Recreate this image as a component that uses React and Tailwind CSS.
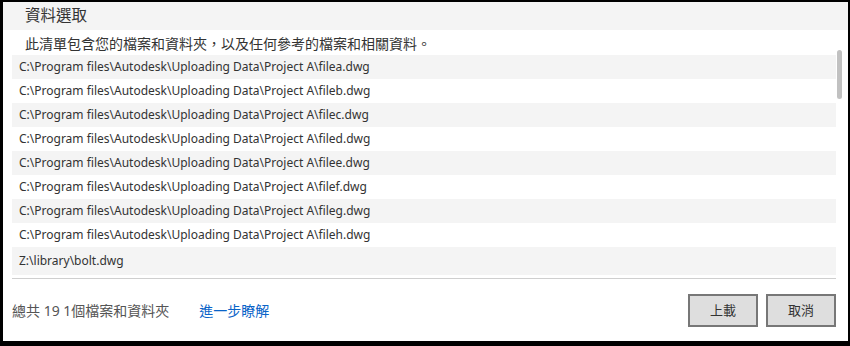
const files = [
  'C:\\Program files\\Autodesk\\Uploading Data\\Project A\\filea.dwg',
  'C:\\Program files\\Autodesk\\Uploading Data\\Project A\\fileb.dwg',
  'C:\\Program files\\Autodesk\\Uploading Data\\Project A\\filec.dwg',
  'C:\\Program files\\Autodesk\\Uploading Data\\Project A\\filed.dwg',
  'C:\\Program files\\Autodesk\\Uploading Data\\Project A\\filee.dwg',
  'C:\\Program files\\Autodesk\\Uploading Data\\Project A\\filef.dwg',
  'C:\\Program files\\Autodesk\\Uploading Data\\Project A\\fileg.dwg',
  'C:\\Program files\\Autodesk\\Uploading Data\\Project A\\fileh.dwg',
]

function App() {
  return (
    <div
      className="w-[850px] h-[346px] bg-white border-black border-l-[3px] border-t-[2px] border-r-[2px] border-b-[5px] flex flex-col text-[#333]"
      style={{ fontFamily: '"Noto Sans", "Noto Sans CJK TC", sans-serif' }}
    >
      <header className="h-[28px] bg-[#f4f4f4] flex items-center pl-[22px] text-[15.5px] leading-none">
        資料選取
      </header>

      <p className="h-[20px] pl-[22px] pt-[7px] text-[14px] leading-none text-[#333]">
        此清單包含您的檔案和資料夾，以及任何參考的檔案和相關資料。
      </p>

      <div className="flex ml-[9px]">
        <div className="flex-1 pt-[5px] border-b border-[#cfcfcf]">
          {files.map((f, i) => (
            <div
              key={f}
              className={`h-[24px] flex items-center pl-[7px] text-[12px] ${i % 2 === 0 ? 'bg-[#f4f4f4]' : 'bg-white'}`}
            >
              {f}
            </div>
          ))}
          <div className="h-[28px] flex items-center pl-[7px] text-[12px] bg-[#f4f4f4] mb-[3px]">
            Z:\library\bolt.dwg
          </div>
        </div>
        <div className="w-[12px] pl-[1px]">
          <div className="w-[5px] h-[49px] rounded-full bg-[#c1c1c1]" />
        </div>
      </div>

      <footer className="flex-1 flex items-center pl-[9px] pr-[12px]">
        <span className="text-[14px] text-[#555]">總共 19 1個檔案和資料夾</span>
        <a className="ml-[30px] text-[14px] text-[#0a64c8] cursor-pointer">進一步瞭解</a>
        <div className="ml-auto flex gap-[8px] mt-[1px]">
          <button className="w-[70px] h-[33px] border-2 border-[#777] bg-[#dedede] text-[13px] text-[#333]">
            上載
          </button>
          <button className="w-[70px] h-[33px] border-2 border-[#777] bg-[#dedede] text-[13px] text-[#333]">
            取消
          </button>
        </div>
      </footer>
    </div>
  )
}

export default App
